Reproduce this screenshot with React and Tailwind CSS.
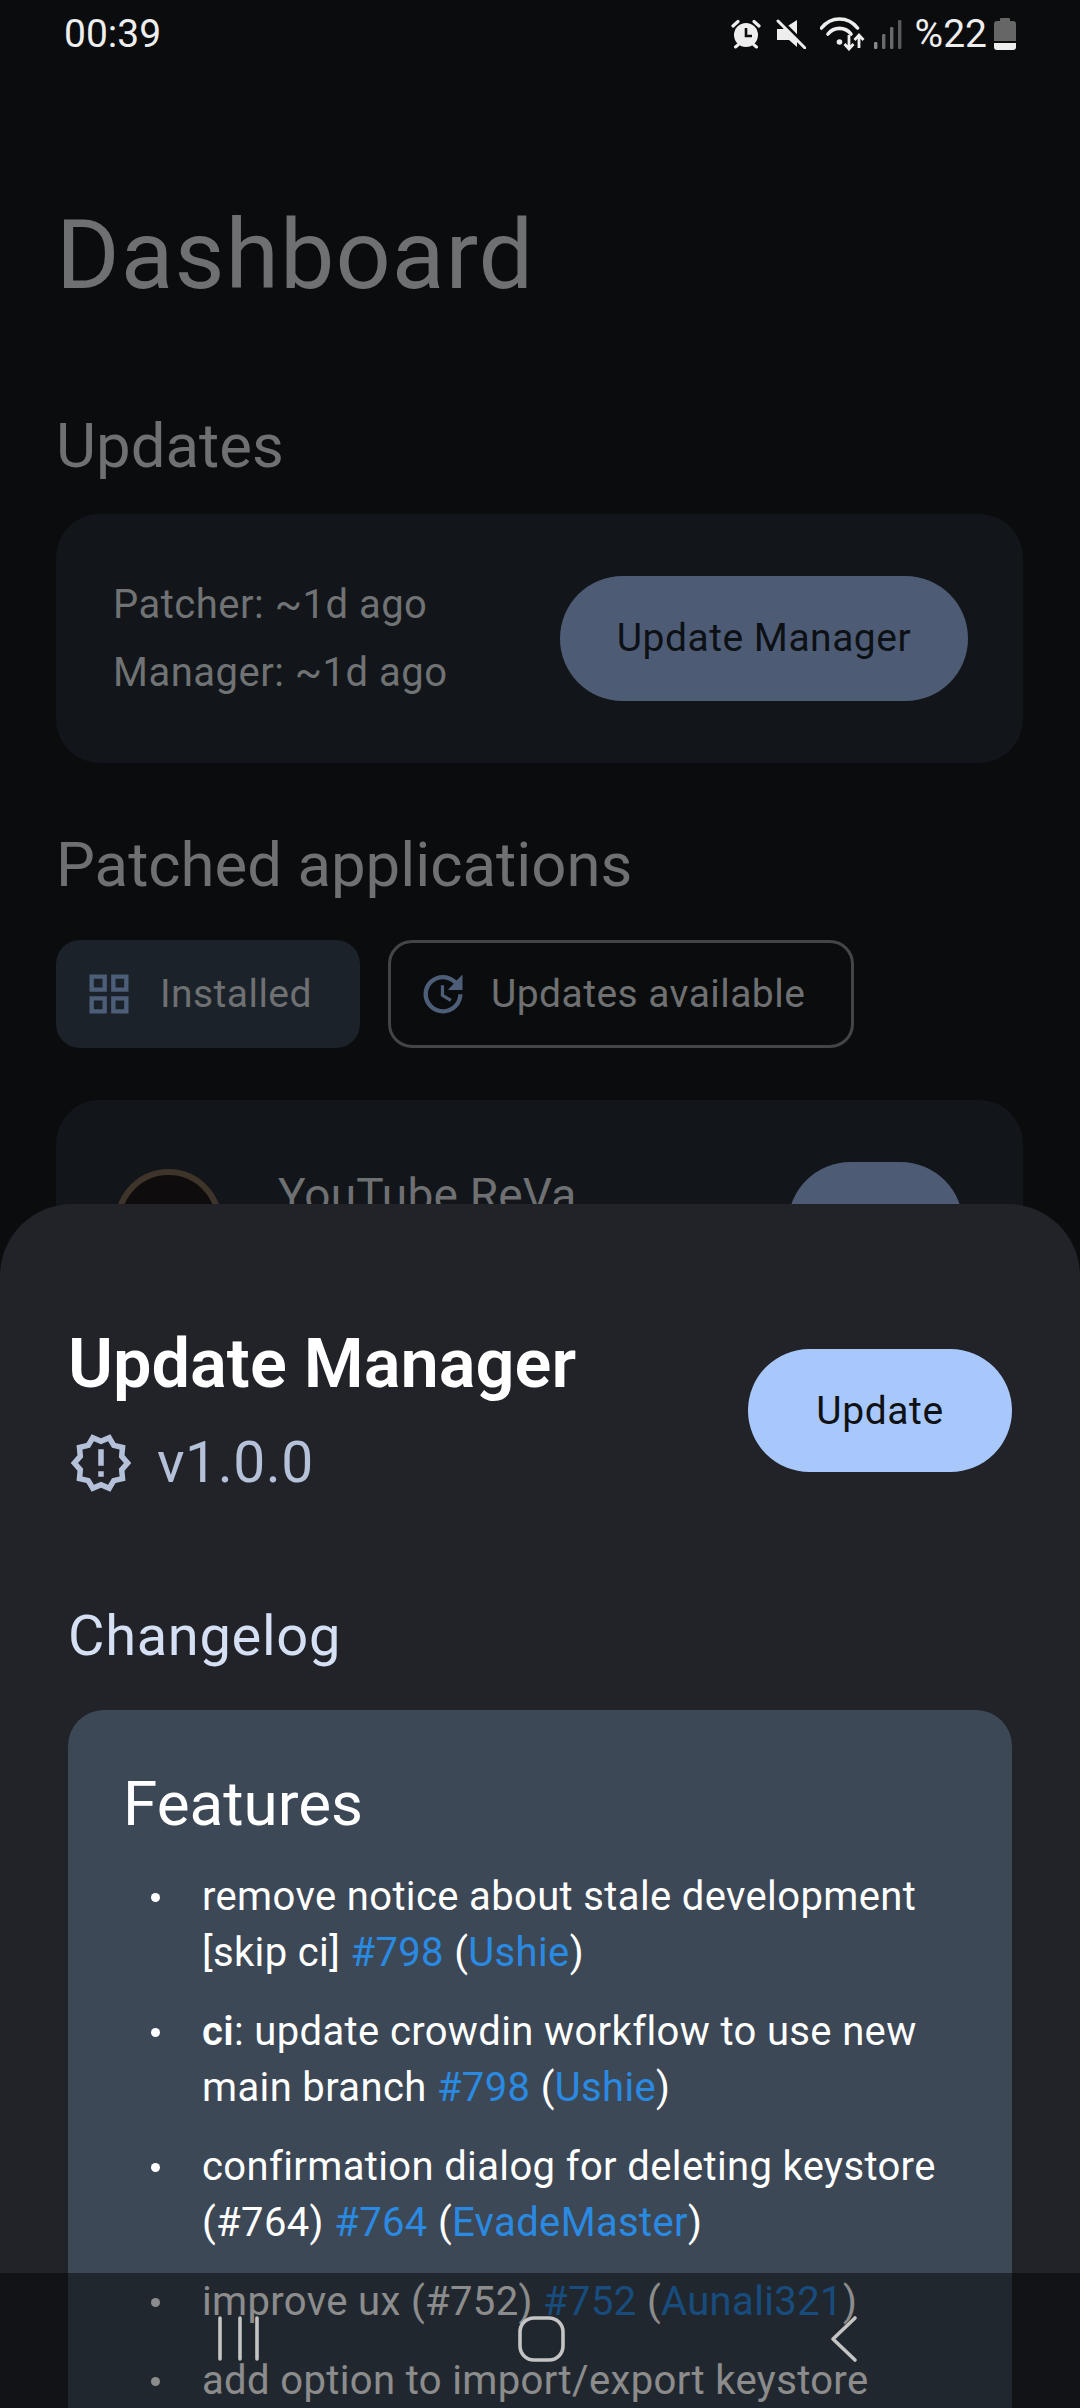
import React from "react";
import { MdOutlineGridView, MdUpdate, MdOutlineNewReleases } from "react-icons/md";

function Alarm() {
  return (
    <svg width="30" height="30" viewBox="0 0 30 30" className="shrink-0">
      <circle cx="15" cy="16" r="12" fill="#eeeeee" />
      <path d="M2 7 L7 2.5 M28 7 L23 2.5" stroke="#eeeeee" strokeWidth="3.2" strokeLinecap="round" />
      <path d="M4.5 28 L7.5 25.5 M25.5 28 L22.5 25.5" stroke="#eeeeee" strokeWidth="3" strokeLinecap="round" />
      <path d="M15 9 V17 H21" stroke="#0d0e10" strokeWidth="2.6" fill="none" />
    </svg>
  );
}

function Mute() {
  return (
    <svg width="30" height="30" viewBox="0 0 30 30" className="shrink-0">
      <path d="M1 10 H7 L21 1 V28 L13 21 H1 Z" fill="#eeeeee" />
      <path d="M2 -1 L31 28" stroke="#0d0e10" strokeWidth="4" />
      <path d="M2 2 L29 29" stroke="#eeeeee" strokeWidth="3" strokeLinecap="round" />
    </svg>
  );
}

function Wifi() {
  return (
    <svg width="45" height="34" viewBox="0 0 45 34" fill="none" className="shrink-0">
      <path d="M1.5 11 C11 -1 28 -1 37.5 11" stroke="#eeeeee" strokeWidth="3.6" strokeLinecap="round" />
      <path d="M8 17 C14 9.5 25 9.5 31 17" stroke="#eeeeee" strokeWidth="3.6" strokeLinecap="round" />
      <circle cx="19.5" cy="25" r="2.8" fill="#eeeeee" />
      <path d="M29 18 V32 M24.5 27 L29 32 L33.5 27" stroke="#eeeeee" strokeWidth="2.8" />
      <path d="M39 31 V18 M34.5 23 L39 18 L43.5 23" stroke="#eeeeee" strokeWidth="2.8" />
    </svg>
  );
}

function Signal() {
  return (
    <svg width="28" height="30" viewBox="0 0 28 30" className="shrink-0">
      <rect x="0" y="23" width="3.4" height="7" rx="1.2" fill="#8a8a8a" />
      <rect x="8" y="15" width="3.4" height="15" rx="1.2" fill="#6a6a6a" />
      <rect x="16" y="8" width="3.4" height="22" rx="1.2" fill="#6a6a6a" />
      <rect x="24" y="1" width="3.4" height="29" rx="1.2" fill="#5a5a5a" />
    </svg>
  );
}

function Battery() {
  return (
    <svg width="22" height="32" viewBox="0 0 22 32" className="shrink-0">
      <path d="M7 0 H15 Q16 0 16 1 V3 H19 Q22 3 22 6 V23 H0 V6 Q0 3 3 3 H6 V1 Q6 0 7 0 Z" fill="#666666" />
      <path d="M0 25 H22 V29 Q22 32 19 32 H3 Q0 32 0 29 Z" fill="#eeeeee" />
    </svg>
  );
}

function StatusBar() {
  return (
    <div className="h-[68px] pl-[64px] pr-[64px] flex items-center justify-between text-[39px] leading-none text-[#eeeeee] font-['Roboto',sans-serif]">
      <span>00:39</span>
      <div className="flex items-center">
        <Alarm />
        <div className="w-[15px]" />
        <Mute />
        <div className="w-[14px]" />
        <Wifi />
        <div className="w-[9px]" />
        <Signal />
        <span className="ml-[13px] mr-[7px]">%22</span>
        <Battery />
      </div>
    </div>
  );
}

function Background() {
  return (
    <div className="font-['Roboto',sans-serif]">
      <div className="pl-[56px] pr-[57px]">
        <h1 className="mt-[137px] text-[97px] leading-[100px] text-[#6f7072] tracking-[1px]">Dashboard</h1>
        <h2 className="mt-[107px] text-[61.7px] leading-[68px] text-[#6f7072]">Updates</h2>
        <div className="mt-[34px] h-[249px] rounded-[44px] bg-[#12161a] flex items-center justify-between pl-[57px] pr-[55px]">
          <div className="text-[40px] leading-[68px] text-[#707274] tracking-[0.5px]">
            <div>Patcher: ~1d ago</div>
            <div>Manager: ~1d ago</div>
          </div>
          <button className="w-[408px] h-[125px] rounded-full bg-[#4d5c74] text-[39px] text-[#0d1015] tracking-[0.5px]">Update Manager</button>
        </div>
        <h2 className="mt-[68px] text-[61.7px] leading-[68px] text-[#6f7072]">Patched applications</h2>
        <div className="mt-[41px] flex gap-[28px] text-[39px] text-[#6f7072] tracking-[0.45px]">
          <div className="h-[108px] w-[304px] rounded-[24px] bg-[#1b222a] flex items-center pl-[27px]">
            <MdOutlineGridView size={52} color="#4d5e79" />
            <span className="ml-[25px]">Installed</span>
          </div>
          <div className="h-[108px] w-[466px] rounded-[24px] border-[3px] border-[#434548] flex items-center pl-[26px]">
            <MdUpdate size={52} color="#4d5e79" />
            <span className="ml-[22px]">Updates available</span>
          </div>
        </div>
        <div className="mt-[52px] h-[300px] rounded-[44px] bg-[#12161a] flex items-start pl-[59px] pr-[60px] pt-[69px]">
          <div className="w-[107px] h-[107px] rounded-full border-[6px] border-[#3e342a] bg-[#0e0c0c] shrink-0" />
          <div className="ml-[56px] text-[46px] leading-[52px] text-[#6f7072] flex-1 tracking-[0.2px]">YouTube ReVa</div>
          <div className="w-[175px] h-[125px] -mt-[7px] rounded-full bg-[#4d5c74]" />
        </div>
      </div>
    </div>
  );
}

function Item({ children }) {
  return (
    <li className="relative pl-[76px] text-[40px] leading-[56px] tracking-[0.36px] text-white">
      <span className="absolute left-[25px] top-[24px] w-[9px] h-[9px] rounded-full bg-white" />
      {children}
    </li>
  );
}

const Link = ({ children }) => <span className="text-[#2a8ae2]">{children}</span>;

function Sheet() {
  return (
    <div className="absolute left-0 right-0 top-[1204px] bottom-0 overflow-hidden rounded-t-[72px] bg-[#212328] font-['Roboto',sans-serif]">
      <div className="pl-[68px] pr-[68px]">
        <div className="pt-[118px] flex items-start justify-between">
          <div>
            <div className="text-[68.5px] leading-[84px] font-semibold text-white">Update Manager</div>
            <div className="mt-[24px] flex items-center text-[57px] leading-[64px] text-[#b4c1d8] tracking-[0.5px]">
              <MdOutlineNewReleases size={66} color="#b4c1d8" className="shrink-0" />
              <span className="ml-[23px]">v1.0.0</span>
            </div>
          </div>
          <button className="mt-[27px] w-[264px] h-[123px] rounded-full bg-[#a8c7fa] text-[39px] text-[#0f1115] tracking-[0.6px] pt-[1px]">Update</button>
        </div>
        <div className="mt-[108px] text-[56px] leading-[64px] text-[#d5e0f5] tracking-[0.7px]">Changelog</div>
        <div className="mt-[42px] h-[800px] rounded-t-[36px] bg-[#3d4856] pl-[58px] pr-[40px] pt-[58px]">
          <div className="text-[62px] leading-[72px] text-white -ml-[3px]">Features</div>
          <ul className="mt-[29px] flex flex-col gap-[23px]">
            <Item>remove notice about stale development [skip ci] <Link>#798</Link> (<Link>Ushie</Link>)</Item>
            <Item><b className="font-semibold">ci</b>: update crowdin workflow to use new main branch <Link>#798</Link> (<Link>Ushie</Link>)</Item>
            <Item>confirmation dialog for deleting keystore (#764) <Link>#764</Link> (<Link>EvadeMaster</Link>)</Item>
            <Item>improve ux (#752) <Link>#752</Link> (<Link>Aunali321</Link>)</Item>
            <Item>add option to import/export keystore</Item>
          </ul>
        </div>
      </div>
    </div>
  );
}

function NavBar() {
  return (
    <div className="absolute left-0 right-0 bottom-0 h-[135px] bg-black/45 flex items-start justify-center">
      <svg width="1080" height="135" viewBox="0 0 1080 135" fill="none" stroke="#c4c4c4" strokeWidth="3.6" strokeLinecap="round" strokeLinejoin="round">
        <path d="M220 45 V86 M240 45 V86 M257 45 V86" />
        <rect x="520" y="45" width="43" height="42" rx="14" />
        <path d="M855 45 L833 66 L855 87" />
      </svg>
    </div>
  );
}

export default function App() {
  return (
    <div className="relative w-[1080px] h-[2408px] overflow-hidden bg-[#0b0c0e]">
      <StatusBar />
      <Background />
      <Sheet />
      <NavBar />
    </div>
  );
}
